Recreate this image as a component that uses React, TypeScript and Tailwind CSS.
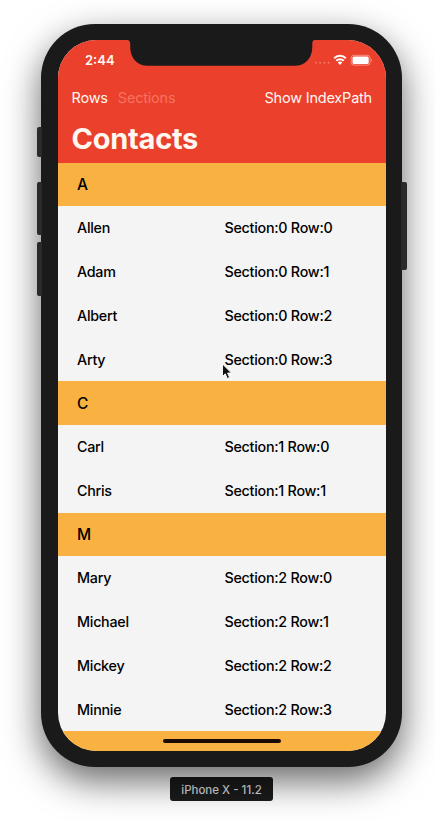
import React from 'react';

type Section = { title: string; names: string[] };

const sections: Section[] = [
  { title: 'A', names: ['Allen', 'Adam', 'Albert', 'Arty'] },
  { title: 'C', names: ['Carl', 'Chris'] },
  { title: 'M', names: ['Mary', 'Michael', 'Mickey', 'Minnie'] },
];

function StatusIcons() {
  return (
    <svg className="block h-[12px] w-[60px]" viewBox="0 0 60 12" fill="none">
      <g fill="#ff8a75" opacity="0.75">
        <circle cx="2" cy="8.8" r="1" />
        <circle cx="6.2" cy="8.8" r="1" />
        <circle cx="10.4" cy="8.8" r="1" />
        <circle cx="14.6" cy="8.8" r="1" />
      </g>
      <g stroke="#fff" strokeWidth="2">
        <path d="M20.2 4.2a8.300 8.300 0 0 1 11.600 0" />
        <path d="M22.3 6.800a5.200 5.200 0 0 1 7.400 0" />
      </g>
      <path d="M23.800 8.500a3.200 3.200 0 0 1 4.400 0L26 10.900Z" fill="#fff" />
      <rect x="37.200" y="1.300" width="18.800" height="9.800" rx="2.6" stroke="#ffb1a3" strokeWidth="0.9" opacity="0.8" />
      <rect x="38.500" y="2.500" width="16.200" height="7.400" rx="1.5" fill="#fff" />
      <path d="M57.2 4.4c1.2.5 1.2 2.9 0 3.4Z" fill="#ffb1a3" opacity="0.8" />
    </svg>
  );
}

function SideButton({ place }: { place: string }) {
  return <div className={`absolute bg-[#2a2a2a] ${place}`} />;
}

function Notch() {
  return (
    <svg className="absolute left-[69.500px] top-[-1px] h-[28px] w-[188px]" viewBox="0 0 188 28">
      <path
        d="M0 0V1C2 1 3.2 2.2 3.2 4.5V8C3.2 19 10 26.8 21 26.8H167.5C178.500 26.8 185.300 19 185.300 8V4.500C185.300 2.200 186 1 188 1V0Z"
        fill="#1a1a1a"
      />
    </svg>
  );
}

export default function App() {
  return (
    <div className="relative flex h-[821px] w-[435px] flex-col items-center overflow-hidden bg-white pt-[23.5px] font-['Inter','Liberation_Sans',sans-serif]">
      <div className="relative ml-[8px] h-[743.5px] w-[361px] shrink-0 rounded-[54px] bg-[#1a1a1a] p-[16.500px] pr-[16px] shadow-[0_14px_36px_rgba(0,0,0,0.6)]">
        <SideButton place="left-[-4.500px] top-[103px] h-[30.500px] w-[5.500px] rounded-l-[2px]" />
        <SideButton place="left-[-4.500px] top-[158px] h-[53.500px] w-[5.500px] rounded-l-[2px]" />
        <SideButton place="left-[-4.500px] top-[218.500px] h-[53.500px] w-[5.500px] rounded-l-[2px]" />
        <SideButton place="right-[-5px] top-[158.500px] h-[88px] w-[6px] rounded-r-[2px]" />
        <div className="relative h-[710.500px] w-full overflow-hidden rounded-[38px] bg-[#f4f4f4]">
          <Notch />
          <header className="h-[122.500px] bg-[#eb402c] text-[#fff8f0]">
            <div className="flex h-[40px] items-center justify-between pl-[27.500px] pr-[12px]">
              <span className="pt-px text-[13px] font-semibold">2:44</span>
              <StatusIcons />
            </div>
            <div className="flex h-[36px] items-center px-[14px] text-[14.500px] tracking-[-0.2px]">
              <span>Rows</span>
              <span className="ml-[10px] text-[#f57360]">Sections</span>
              <span className="ml-auto">Show IndexPath</span>
            </div>
            <h1 className="pl-[14px] text-[29px] font-bold leading-[46px] tracking-[-0.25px]">Contacts</h1>
          </header>
          <main className="text-[14.300px] font-medium tracking-[-0.26px] text-black">
            {sections.map((section, s) => (
              <section key={section.title}>
                <h2 className="flex h-[43.750px] items-center bg-[#f9b241] pl-[19.500px] text-[15.500px] font-medium">
                  {section.title}
                </h2>
                {section.names.map((name, r) => (
                  <div key={name} className="flex h-[43.750px] items-center pl-[19.500px]">
                    <span className="w-[147.500px]">{name}</span>
                    <span>{`Section:${s} Row:${r}`}</span>
                  </div>
                ))}
              </section>
            ))}
            <div className="flex h-[20px] justify-center bg-[#f9b241] pt-[8px]">
              <div className="h-[4px] w-[118px] rounded-full bg-[#1c0903]" />
            </div>
          </main>
          <div className="absolute bottom-0 left-[21px] h-[2px] w-[8px] rounded-t-full bg-[#2a0d05]" />
        </div>
      </div>
      <div className="ml-[8px] mt-[10px] flex h-[24px] w-[103px] shrink-0 items-center justify-center rounded-[3px] bg-[#1b1b1b] pt-[3px] text-[11.500px] font-medium text-[#dedede]">
        iPhone X - 11.2
      </div>
      <svg className="absolute left-[221px] top-[363px] h-[18px] w-[12px]" viewBox="0 0 12 18">
        <path d="M1.500 1V13.500L4.300 10.800L6.300 15.500L8.600 14.500L6.600 10H10.500Z" fill="#111" stroke="#fff" strokeWidth="0.900" />
      </svg>
    </div>
  );
}
